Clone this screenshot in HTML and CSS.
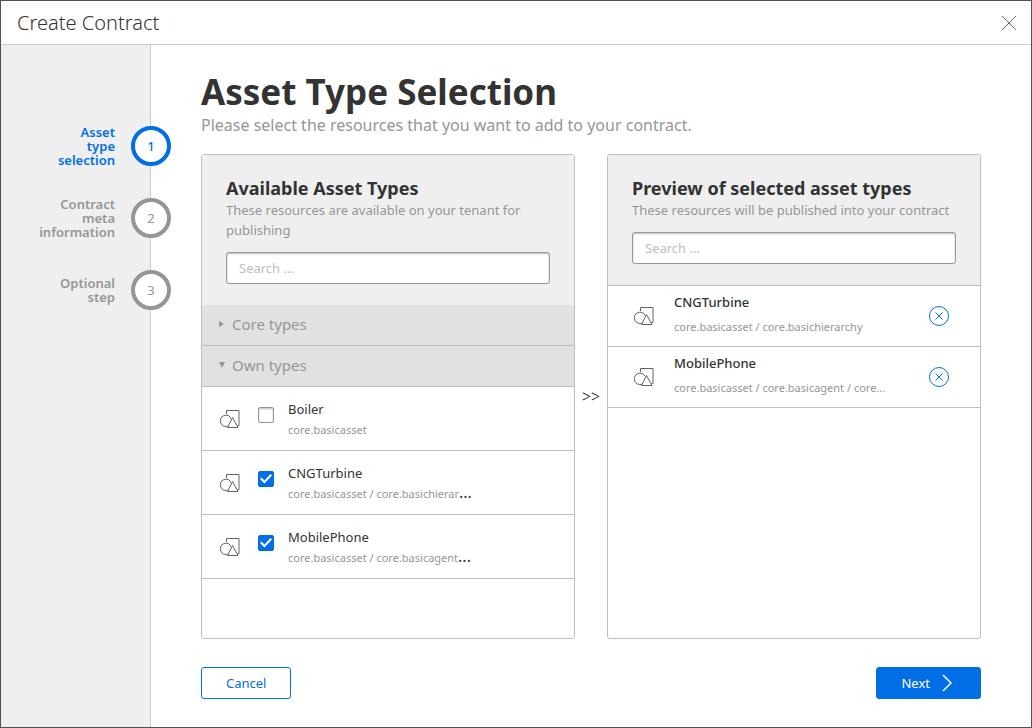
FILE: index.html
```html
<!DOCTYPE html>
<html lang="en">
<head>
<meta charset="utf-8">
<title>Create Contract</title>
<link rel="stylesheet" href="styles.css">
</head>
<body>
<svg class="defs" aria-hidden="true">
  <symbol id="asset" viewBox="0 0 20 20">
    <path d="M6.500 4V.5h12.500v15h-1.500"/>
    <path d="M8 16.200A5.700 5.700 0 1 1 11.200 8.500M12.500 7.500l-5 10h10.500z"/>
  </symbol>
  <symbol id="remove" viewBox="0 0 20 20">
    <circle cx="10" cy="10" r="9.500"/>
    <path d="M6.500 6.500l7 7M13.500 6.500l-7 7"/>
  </symbol>
</svg>
<div class="dialog">
  <header class="titlebar">
    <h1 class="titlebar-text">Create Contract</h1>
    <button class="close" type="button" aria-label="Close">
      <svg width="16" height="16" viewBox="0 0 16 16"><path d="M1 1l14 14M15 1L1 15"/></svg>
    </button>
  </header>
  <div class="body">
    <nav class="sidebar" aria-label="Steps">
      <ol class="steps">
        <li class="step active"><span class="step-label">Asset type selection</span><span class="step-number">1</span></li>
        <li class="step"><span class="step-label">Contract meta information</span><span class="step-number">2</span></li>
        <li class="step"><span class="step-label">Optional step</span><span class="step-number">3</span></li>
      </ol>
    </nav>
    <main class="content">
      <h2 class="heading">Asset Type Selection</h2>
      <p class="lead">Please select the resources that you want to add to your contract.</p>
      <div class="panels">
        <section class="panel">
          <div class="panel-head">
            <h3 class="panel-title">Available Asset Types</h3>
            <p class="panel-text">These resources are available on your tenant for publishing</p>
            <input class="search" type="text" placeholder="Search ..." aria-label="Search available asset types">
          </div>
          <button class="group" type="button" aria-expanded="false">
            <svg class="caret" width="6" height="6" viewBox="0 0 6 6"><path d="M0 0l5 3-5 3z"/></svg>Core types
          </button>
          <button class="group" type="button" aria-expanded="true">
            <svg class="caret" width="6" height="6" viewBox="0 0 6 6"><path d="M0 0h6L3 6z"/></svg>Own types
          </button>
          <ul class="list">
            <li class="item">
              <svg class="asset-icon"><use href="#asset"/></svg>
              <input class="check" type="checkbox" id="boiler">
              <label class="item-label" for="boiler"><span class="name">Boiler</span><span class="types"><span class="types-text">core.basicasset</span></span></label>
            </li>
            <li class="item">
              <svg class="asset-icon"><use href="#asset"/></svg>
              <input class="check" type="checkbox" id="turbine" checked>
              <label class="item-label" for="turbine"><span class="name">CNGTurbine</span><span class="types"><span class="types-text">core.basicasset / core.basichierar</span><span class="more">...</span></span></label>
            </li>
            <li class="item">
              <svg class="asset-icon"><use href="#asset"/></svg>
              <input class="check" type="checkbox" id="phone" checked>
              <label class="item-label" for="phone"><span class="name">MobilePhone</span><span class="types"><span class="types-text">core.basicasset / core.basicagent</span><span class="more">...</span></span></label>
            </li>
          </ul>
        </section>
        <span class="transfer">&gt;&gt;</span>
        <section class="panel">
          <div class="panel-head ruled">
            <h3 class="panel-title">Preview of selected asset types</h3>
            <p class="panel-text">These resources will be published into your contract</p>
            <input class="search" type="text" placeholder="Search ..." aria-label="Search selected asset types">
          </div>
          <ul class="list">
            <li class="selected">
              <svg class="asset-icon"><use href="#asset"/></svg>
              <div class="selected-text"><span class="name strong">CNGTurbine</span><span class="types-text">core.basicasset / core.basichierarchy</span></div>
              <button class="remove" type="button" aria-label="Remove CNGTurbine"><svg width="20" height="20"><use href="#remove"/></svg></button>
            </li>
            <li class="selected">
              <svg class="asset-icon"><use href="#asset"/></svg>
              <div class="selected-text"><span class="name strong">MobilePhone</span><span class="types-text">core.basicasset / core.basicagent / core...</span></div>
              <button class="remove" type="button" aria-label="Remove MobilePhone"><svg width="20" height="20"><use href="#remove"/></svg></button>
            </li>
          </ul>
        </section>
      </div>
      <footer class="actions">
        <button class="button" type="button">Cancel</button>
        <button class="button primary" type="button">Next
          <svg width="10" height="18" viewBox="0 0 10 18"><path d="M1 1l8 8-8 8"/></svg>
        </button>
      </footer>
    </main>
  </div>
</div>
</body>
</html>
```
FILE: styles.css
```css
* { box-sizing: border-box; }
body, h1, h2, h3, p, ul, ol { margin: 0; padding: 0; }
ul, ol { list-style: none; }
body {
  font-family: "Noto Sans", "Open Sans", sans-serif;
  font-size: 13px;
  color: #333;
  background: #fff;
}
button, input { font: inherit; }
button { cursor: pointer; }
.defs { position: absolute; width: 0; height: 0; }
.dialog {
  min-height: 100vh;
  display: flex;
  flex-direction: column;
  border: 1px solid #515153;
  background: #fff;
}
.titlebar {
  height: 44px;
  padding: 0 14px 0 16px;
  display: flex;
  align-items: center;
  justify-content: space-between;
  border-bottom: 1px solid #ccc;
}
.titlebar-text { font-size: 20px; font-weight: 300; line-height: 28px; }
.close {
  display: flex;
  padding: 0;
  border: 0;
  background: none;
}
.close svg { fill: none; stroke: #4d7482; stroke-width: 1; }
.body { flex: 1; display: flex; }
.sidebar {
  width: 150px;
  flex: none;
  padding-top: 81px;
  background: #efefef;
  border-right: 1px solid #ccc;
}
.steps {
  display: flex;
  flex-direction: column;
  gap: 32px;
  margin-right: -21px;
}
.step {
  display: flex;
  align-items: center;
  justify-content: flex-end;
  gap: 16px;
  height: 40px;
  color: #969696;
}
.step-label {
  width: 80px;
  text-align: right;
  font-weight: 600;
  line-height: 14px;
}
.step:last-child .step-label { width: 64px; }
.step.active .step-label { width: 64px; }
.step-number {
  width: 40px;
  height: 40px;
  display: flex;
  align-items: center;
  justify-content: center;
  border: 4px solid #969696;
  border-radius: 50%;
  background: #fff;
}
.step.active { color: #006fe6; }
.step.active .step-number { border-color: #006fe6; font-weight: 500; }
.content {
  flex: 1;
  min-width: 0;
  padding: 25px 50px 28px;
  display: flex;
  flex-direction: column;
}
.heading { font-size: 35px; font-weight: 700; line-height: 44px; }
.lead { font-size: 16px; line-height: 22px; color: #969696; margin-bottom: 18px; }
.panels { flex: 1; display: flex; }
.panel {
  flex: 1 1 0;
  min-width: 0;
  border: 1px solid #bebebe;
  border-radius: 3px;
  overflow: hidden;
}
.panel-head { padding: 22px 24px 21px; background: #efefef; }
.panel-head.ruled { border-bottom: 1px solid #bebebe; }
.panel-title { font-size: 18px; font-weight: 700; line-height: 23px; }
.panel-text { line-height: 20px; color: #969696; }
.search {
  display: block;
  width: 100%;
  height: 32px;
  margin-top: 12px;
  padding: 0 12px;
  color: #333;
  background: #fff;
  border: 1px solid #969696;
  border-radius: 3px;
  box-shadow: inset 0 1px 2px #bebebe;
}
.search::placeholder { color: #bebebe; opacity: 1; }
.group {
  display: flex;
  align-items: center;
  gap: 7px;
  width: 100%;
  height: 41px;
  padding: 0 17px 2px;
  font-size: 15px;
  color: #969696;
  background: #e1e1e1;
  border: 0;
  border-bottom: 1px solid #bebebe;
}
.caret { fill: #969696; }
.item {
  display: flex;
  align-items: flex-start;
  height: 64px;
  padding: 12px 18px;
  border-bottom: 1px solid #bebebe;
}
.asset-icon {
  flex: none;
  width: 20px;
  height: 20px;
  fill: none;
  stroke: #646464;
}
.item .asset-icon { margin: 11px 18px 0 0; }
.check {
  appearance: none;
  flex: none;
  width: 16px;
  height: 16px;
  margin: 8px 14px 0 0;
  display: grid;
  place-items: center;
  background: #fff;
  border: 1px solid #969696;
  border-radius: 2px;
  box-shadow: inset 0 1px 2px #bebebe;
}
.check:checked { background: #006fe6; border-color: #006fe6; box-shadow: none; }
.check:checked::before {
  content: "";
  width: 12px;
  height: 10px;
  background: #fff;
  clip-path: polygon(0 50%, 13% 36%, 37% 65%, 87% 0, 100% 14%, 37% 96%);
}
.item-label { display: flex; flex-direction: column; gap: 1px; }
.name { line-height: 20px; }
.strong { font-weight: 500; }
.types { display: flex; align-items: baseline; }
.types-text { font-size: 11px; line-height: 20px; color: #969696; }
.more { font-size: 16px; line-height: 16px; }
.transfer {
  width: 32px;
  align-self: center;
  text-align: center;
  font-family: "Liberation Serif", "Times New Roman", serif;
  font-size: 16px;
  color: #000;
}
.selected {
  display: flex;
  align-items: center;
  height: 61px;
  padding: 0 31px 0 26px;
  border-bottom: 1px solid #bebebe;
}
.selected .asset-icon { margin-top: 1px; }
.selected-text {
  flex: 1;
  min-width: 0;
  display: flex;
  flex-direction: column;
  gap: 5px;
  padding: 0 20px 4px;
}
.remove {
  display: flex;
  padding: 0;
  border: 0;
  background: none;
}
.remove svg { fill: none; stroke: #006fe6; }
.actions { display: flex; justify-content: space-between; margin-top: 28px; }
.button {
  display: flex;
  align-items: center;
  gap: 12px;
  height: 32px;
  padding: 0 24px;
  color: #006fe6;
  background: #fff;
  border: 1px solid #006fe6;
  border-radius: 3px;
}
.primary { color: #fff; background: #006fe6; padding-right: 28px; }
.primary svg { fill: none; stroke: #fff; stroke-width: 1.5; }
```
